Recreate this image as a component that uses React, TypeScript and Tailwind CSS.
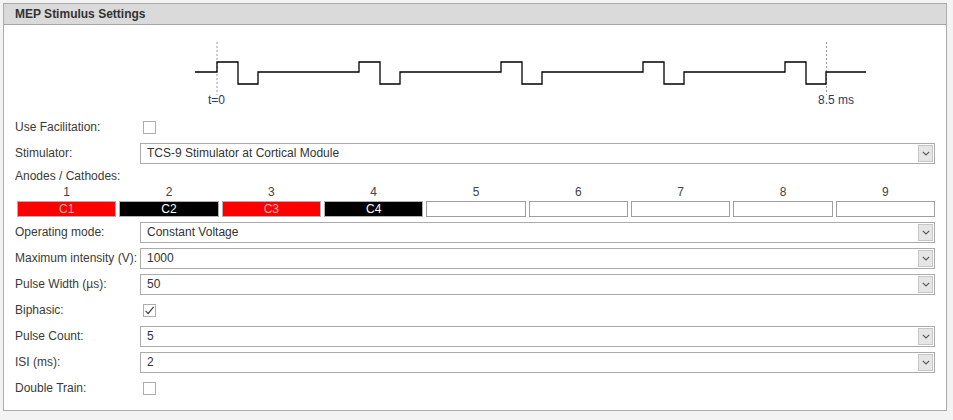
import React from 'react';

const font = { fontFamily: '"Liberation Sans", Arial, sans-serif' };

// x positions in panel space (page x minus 4)
const pulseStarts = [217, 359, 501, 643, 785];

function Waveform() {
  const off = 4;
  let d = `M ${195 - off} 72`;
  pulseStarts.forEach((x, i) => {
    const a = x - off;
    d += ` H ${a} V 62 H ${a + 21} V 84 H ${a + 41} V 72`;
    if (i === pulseStarts.length - 1) d += ` H ${866 - off}`;
  });
  return (
    <svg width="944" height="89" viewBox="0 25 944 89" className="block">
      <line x1={217 - off} y1="42" x2={217 - off} y2="95" stroke="#9a9a9a" strokeWidth="1" strokeDasharray="2 2" />
      <line x1={826.5 - off} y1="42" x2={826.5 - off} y2="95" stroke="#9a9a9a" strokeWidth="1" strokeDasharray="2 2" />
      <path d={d} fill="none" stroke="#000" strokeWidth="1.3" />
      <text x={208 - off} y="104" fontSize="12" fill="#2b3a67" style={font}>t=0</text>
      <text x={818 - off} y="104" fontSize="12" fill="#2b3a67" style={font}>8.5 ms</text>
    </svg>
  );
}

function Checkbox({ checked = false }: { checked?: boolean }) {
  return (
    <div className="ml-[3px] w-[13px] h-[13px] border border-[#adadad] bg-white flex items-center justify-center">
      {checked && (
        <svg width="11" height="11" viewBox="0 0 11 11">
          <path d="M1.5 5.8 L4.2 8.5 L9.6 1.8" fill="none" stroke="#444" strokeWidth="1.2" />
        </svg>
      )}
    </div>
  );
}

function Select({ value }: { value: string }) {
  return (
    <div className="flex-1 h-[21px] border border-[#ababab] bg-white flex items-center pl-[6px] pr-[1px]">
      <span className="flex-1 text-[12px] text-[#333]">{value}</span>
      <div className="w-[15px] h-[17px] bg-[#e6e6e6] border border-[#c6c6c6] flex items-center justify-center">
        <svg width="8" height="5" viewBox="0 0 8 5">
          <path d="M0.8 0.8 L4 4 L7.2 0.8" fill="none" stroke="#5a5a5a" strokeWidth="1.2" />
        </svg>
      </div>
    </div>
  );
}

function Row({ label, children }: { label: string; children: React.ReactNode }) {
  return (
    <div className="h-[26px] flex items-center">
      <div className="w-[125px] shrink-0 whitespace-nowrap text-[12px] text-[#3a3a3a]">{label}</div>
      {children}
    </div>
  );
}

const electrodes: { label: string; kind: 'red' | 'black' | 'empty' }[] = [
  { label: 'C1', kind: 'red' },
  { label: 'C2', kind: 'black' },
  { label: 'C3', kind: 'red' },
  { label: 'C4', kind: 'black' },
  { label: '', kind: 'empty' },
  { label: '', kind: 'empty' },
  { label: '', kind: 'empty' },
  { label: '', kind: 'empty' },
  { label: '', kind: 'empty' },
];

export default function App() {
  return (
    <div className="w-[953px] h-[420px] bg-[#f3f3f3] pt-[3px] pl-[3px]" style={font}>
      <div className="w-[944px] h-[408px] border border-[#ababab] bg-white">
        {/* Header */}
        <div className="h-[21px] bg-[#dadada] border-b border-[#a6a6a6] flex items-center pl-[11px]">
          <span className="text-[12px] font-bold text-[#333]">MEP Stimulus Settings</span>
        </div>

        <Waveform />

        <div className="pl-[11px] pr-[11px]">
          <Row label="Use Facilitation:">
            <Checkbox />
          </Row>
          <Row label="Stimulator:">
            <Select value="TCS-9 Stimulator at Cortical Module" />
          </Row>

          <div className="h-[19px] flex items-center text-[12px] text-[#3a3a3a]">Anodes / Cathodes:</div>
          <div className="ml-[2px] grid grid-cols-9 gap-x-[3px]">
            {electrodes.map((_, i) => (
              <div key={i} className="h-[14px] flex items-center justify-center text-[12px] text-[#444]">
                {i + 1}
              </div>
            ))}
          </div>
          <div className="ml-[2px] mt-[2px] grid grid-cols-9 gap-x-[3px]">
            {electrodes.map((e, i) => (
              <div
                key={i}
                className={
                  e.kind === 'red'
                    ? 'h-[16px] bg-[#ff0000] border border-[#b0b0b0] flex items-center justify-center text-[12px] text-[#ffb4b4]'
                    : e.kind === 'black'
                    ? 'h-[16px] bg-black border border-[#b0b0b0] flex items-center justify-center text-[12px] text-white'
                    : 'h-[16px] bg-white border border-[#9e9e9e]'
                }
              >
                {e.label}
              </div>
            ))}
          </div>

          <div className="mt-[2px]">
            <Row label="Operating mode:">
              <Select value="Constant Voltage" />
            </Row>
            <Row label="Maximum intensity (V):">
              <Select value="1000" />
            </Row>
            <Row label="Pulse Width (µs):">
              <Select value="50" />
            </Row>
            <Row label="Biphasic:">
              <Checkbox checked />
            </Row>
            <Row label="Pulse Count:">
              <Select value="5" />
            </Row>
            <Row label="ISI (ms):">
              <Select value="2" />
            </Row>
            <Row label="Double Train:">
              <Checkbox />
            </Row>
          </div>
        </div>
      </div>
    </div>
  );
}
